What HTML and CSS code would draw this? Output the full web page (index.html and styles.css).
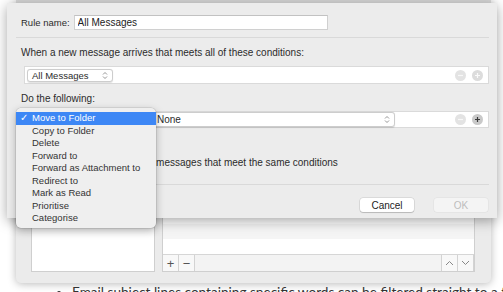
FILE: index.html
```html
<!DOCTYPE html>
<html lang="en">
<head>
    <meta charset="UTF-8">
    <title>Rule editor</title>
    <link rel="stylesheet" href="styles.css">
</head>
<body>
<div class="desktop">

    <!-- Rules window behind the sheet -->
    <div class="rules-window">
        <div class="toolbar"></div>
        <div class="rules-body">
            <div class="rule-list"></div>
            <div class="action-pane">
                <div class="action-rows">
                    <div class="list-row"></div>
                    <div class="list-row"></div>
                    <div class="list-row alt"></div>
                    <div class="list-row"></div>
                </div>
                <div class="action-bar">
                    <span class="seg">+</span>
                    <span class="seg">&minus;</span>
                    <span class="bar-fill"></span>
                    <span class="seg">
                        <svg width="9" height="6" viewBox="0 0 9 6"><path d="M1 5 L4.5 1.5 L8 5" fill="none" stroke="#888" stroke-width="1"/></svg>
                    </span>
                    <span class="seg">
                        <svg width="9" height="6" viewBox="0 0 9 6"><path d="M1 1 L4.5 4.5 L8 1" fill="none" stroke="#888" stroke-width="1"/></svg>
                    </span>
                </div>
            </div>
        </div>
    </div>

    <ul class="article">
        <li>Email subject lines containing specific words can be filtered straight to a folder</li>
    </ul>

    <!-- Sheet dialog -->
    <div class="sheet">
        <div class="name-row">
            <label for="ruleName">Rule name:</label>
            <input type="text" id="ruleName" value="All Messages">
        </div>

        <div class="separator"></div>

        <p class="caption">When a new message arrives that meets all of these conditions:</p>
        <div class="rule-box">
            <span class="popup popup-cond">All Messages
                <svg class="updown" width="6" height="9" viewBox="0 0 6 9"><path d="M1 3.5 L3 1.5 L5 3.5 M1 5.5 L3 7.5 L5 5.5" fill="none" stroke="#8a8a8a" stroke-width="0.9"/></svg>
            </span>
            <span class="round-btns">
                <svg width="11" height="11" viewBox="0 0 11 11"><circle cx="5.5" cy="5.5" r="5.5" fill="#e3e3e3"/><path d="M3 5.5 H8" stroke="#f7f7f7" stroke-width="1.2"/></svg>
                <svg width="11" height="11" viewBox="0 0 11 11"><circle cx="5.5" cy="5.5" r="5.5" fill="#dcdcdc"/><path d="M3 5.5 H8 M5.5 3 V8" stroke="#fafafa" stroke-width="1.2"/></svg>
            </span>
        </div>

        <p class="caption">Do the following:</p>
        <div class="rule-box action-box">
            <!-- the action popup sits under the open menu -->
            <span class="popup popup-action"></span>
            <span class="popup popup-target">None
                <svg class="updown" width="6" height="9" viewBox="0 0 6 9"><path d="M1 3.5 L3 1.5 L5 3.5 M1 5.5 L3 7.5 L5 5.5" fill="none" stroke="#8a8a8a" stroke-width="0.9"/></svg>
            </span>
            <span class="round-btns">
                <svg width="11" height="11" viewBox="0 0 11 11"><circle cx="5.5" cy="5.5" r="5.5" fill="#e3e3e3"/><path d="M3 5.5 H8" stroke="#f7f7f7" stroke-width="1.2"/></svg>
                <svg width="11" height="11" viewBox="0 0 11 11"><circle cx="5.5" cy="5.5" r="5.5" fill="#c9c9c9"/><path d="M3 5.5 H8 M5.5 3 V8" stroke="#3a3a3a" stroke-width="1.2"/></svg>
            </span>
        </div>

        <label class="check-row"><input type="checkbox"> Do not apply other rules to messages that meet the same conditions</label>

        <div class="separator"></div>

        <div class="buttons">
            <button class="btn">Cancel</button>
            <button class="btn btn-disabled">OK</button>
        </div>
    </div>

    <!-- Open popup menu -->
    <ul class="popup-menu">
        <li class="selected"><span class="check">✓</span>Move to Folder</li>
        <li>Copy to Folder</li>
        <li>Delete</li>
        <li>Forward to</li>
        <li>Forward as Attachment to</li>
        <li>Redirect to</li>
        <li>Mark as Read</li>
        <li>Prioritise</li>
        <li>Categorise</li>
    </ul>

</div>
</body>
</html>
```

FILE: styles.css
```css
body {
    margin: 0;
    background: #fff;
    font-family: 'Liberation Sans', Arial, sans-serif;
    color: #2b2b2b;
}

.desktop {
    position: relative;
    width: 503px;
    height: 292px;
    overflow: hidden;
    padding-left: 16px;
    box-sizing: border-box;
}

/* Window behind */
.rules-window {
    width: 475px;
    height: 283px;
    background: #ebebeb;
    border-radius: 0 0 5px 5px;
    box-shadow: 0 1px 8px rgba(0, 0, 0, 0.28);
    display: flex;
    flex-direction: column;
}

.toolbar {
    height: 20px;
    background: #d6d6d6;
}

.rules-body {
    flex: 1;
    display: flex;
    align-items: flex-end;
    gap: 7px;
    padding: 0 16px 11px 15px;
}

.rule-list {
    width: 124px;
    height: 200px;
    background: #fff;
    border: 1px solid #cfcfcf;
    box-sizing: border-box;
}

.action-pane {
    flex: 1;
    border: 1px solid #cfcfcf;
    display: flex;
    flex-direction: column;
}

.list-row {
    height: 15px;
    background: #fff;
}

.list-row.alt {
    background: #f5f5f5;
}

.action-bar {
    display: flex;
    height: 16px;
    border-top: 1px solid #d6d6d6;
    background: #f3f3f3;
}

.seg {
    width: 15px;
    display: flex;
    align-items: center;
    justify-content: center;
    font-size: 13px;
    color: #555;
    border-right: 1px solid #d3d3d3;
    background: #f8f8f8;
}

.bar-fill {
    flex: 1;
    border-right: 1px solid #d3d3d3;
}

.article {
    margin: 1px 0 0;
    padding-left: 56px;
    font-family: Lato, 'Open Sans', sans-serif;
    font-size: 13.6px;
    line-height: 17px;
    color: #333;
    white-space: nowrap;
}

/* Sheet dialog */
.sheet {
    position: absolute;
    left: 7px;
    top: 3px;
    width: 490px;
    height: 215px;
    box-sizing: border-box;
    padding: 12px 8px 0 14px;
    background: #ececec;
    box-shadow: 0 3px 12px rgba(0, 0, 0, 0.35);
    font-size: 10px;
}

.name-row {
    display: flex;
    align-items: center;
    gap: 4px;
    height: 15px;
}

.name-row label {
    font-size: 9.5px;
}

.name-row input {
    width: 254px;
    height: 15px;
    box-sizing: border-box;
    border: 1px solid #d0d0d0;
    border-top-color: #c2c2c2;
    padding: 0 3px;
    font: inherit;
    color: #222;
    outline: none;
}

.separator {
    height: 1px;
    background: #d9d9d9;
    margin: 7px 0 0 -5px;
}

.caption {
    margin: 9px 0 0;
    line-height: 12px;
}

.rule-box {
    display: flex;
    align-items: center;
    margin: 7px 0 0 3px;
    height: 18px;
    background: #fff;
    border: 1px solid #dadada;
    box-sizing: border-box;
    padding: 0 5px 0 2px;
}

.action-box {
    margin-top: 6px;
    height: 17px;
}

.popup {
    display: flex;
    align-items: center;
    height: 13px;
    box-sizing: border-box;
    padding: 0 4px;
    border: 1px solid #cdcdcd;
    border-radius: 3px;
    background: #fff;
    box-shadow: 0 0.5px 1px rgba(0, 0, 0, 0.12);
    font-size: 9.5px;
}

.popup-cond {
    width: 86px;
}

.popup-action {
    width: 123px;
}

.popup-target {
    width: 243px;
    margin-left: 2px;
    height: 15px;
    font-size: 10px;
}

.updown {
    margin-left: auto;
}

.round-btns {
    margin-left: auto;
    display: flex;
    gap: 6px;
}

.round-btns svg {
    display: block;
}

.check-row {
    display: flex;
    align-items: center;
    gap: 5px;
    margin: 29px 0 0;
    line-height: 12px;
}

.check-row input {
    margin: 0;
    width: 10px;
    height: 10px;
}

.check-row + .separator {
    margin-top: 15px;
}

.buttons {
    display: flex;
    justify-content: flex-end;
    gap: 20px;
    margin-top: 13px;
    padding-right: 1px;
}

.btn {
    width: 54px;
    height: 14px;
    padding: 0;
    border: none;
    border-radius: 3px;
    background: #fff;
    box-shadow: 0 0 0 0.5px rgba(0, 0, 0, 0.15), 0 1px 1px rgba(0, 0, 0, 0.15);
    font: inherit;
    color: #222;
}

.btn-disabled {
    background: #f4f4f4;
    color: #bdbdbd;
    box-shadow: 0 0 0 0.5px rgba(0, 0, 0, 0.06);
}

/* Popup menu */
.popup-menu {
    position: absolute;
    left: 16px;
    top: 108px;
    width: 140px;
    margin: 0;
    padding: 4px 0 3px;
    list-style: none;
    background: #efefef;
    border-radius: 5px;
    box-shadow: 0 0 0 0.5px rgba(0, 0, 0, 0.15), 0 3px 9px rgba(0, 0, 0, 0.28);
    font-size: 9.5px;
    color: #333;
}

.popup-menu li {
    height: 12.55px;
    line-height: 12.55px;
    padding-left: 16px;
    position: relative;
}

.popup-menu li.selected {
    background: #3d87f5;
    color: #fff;
}

.check {
    position: absolute;
    left: 4px;
}
```
